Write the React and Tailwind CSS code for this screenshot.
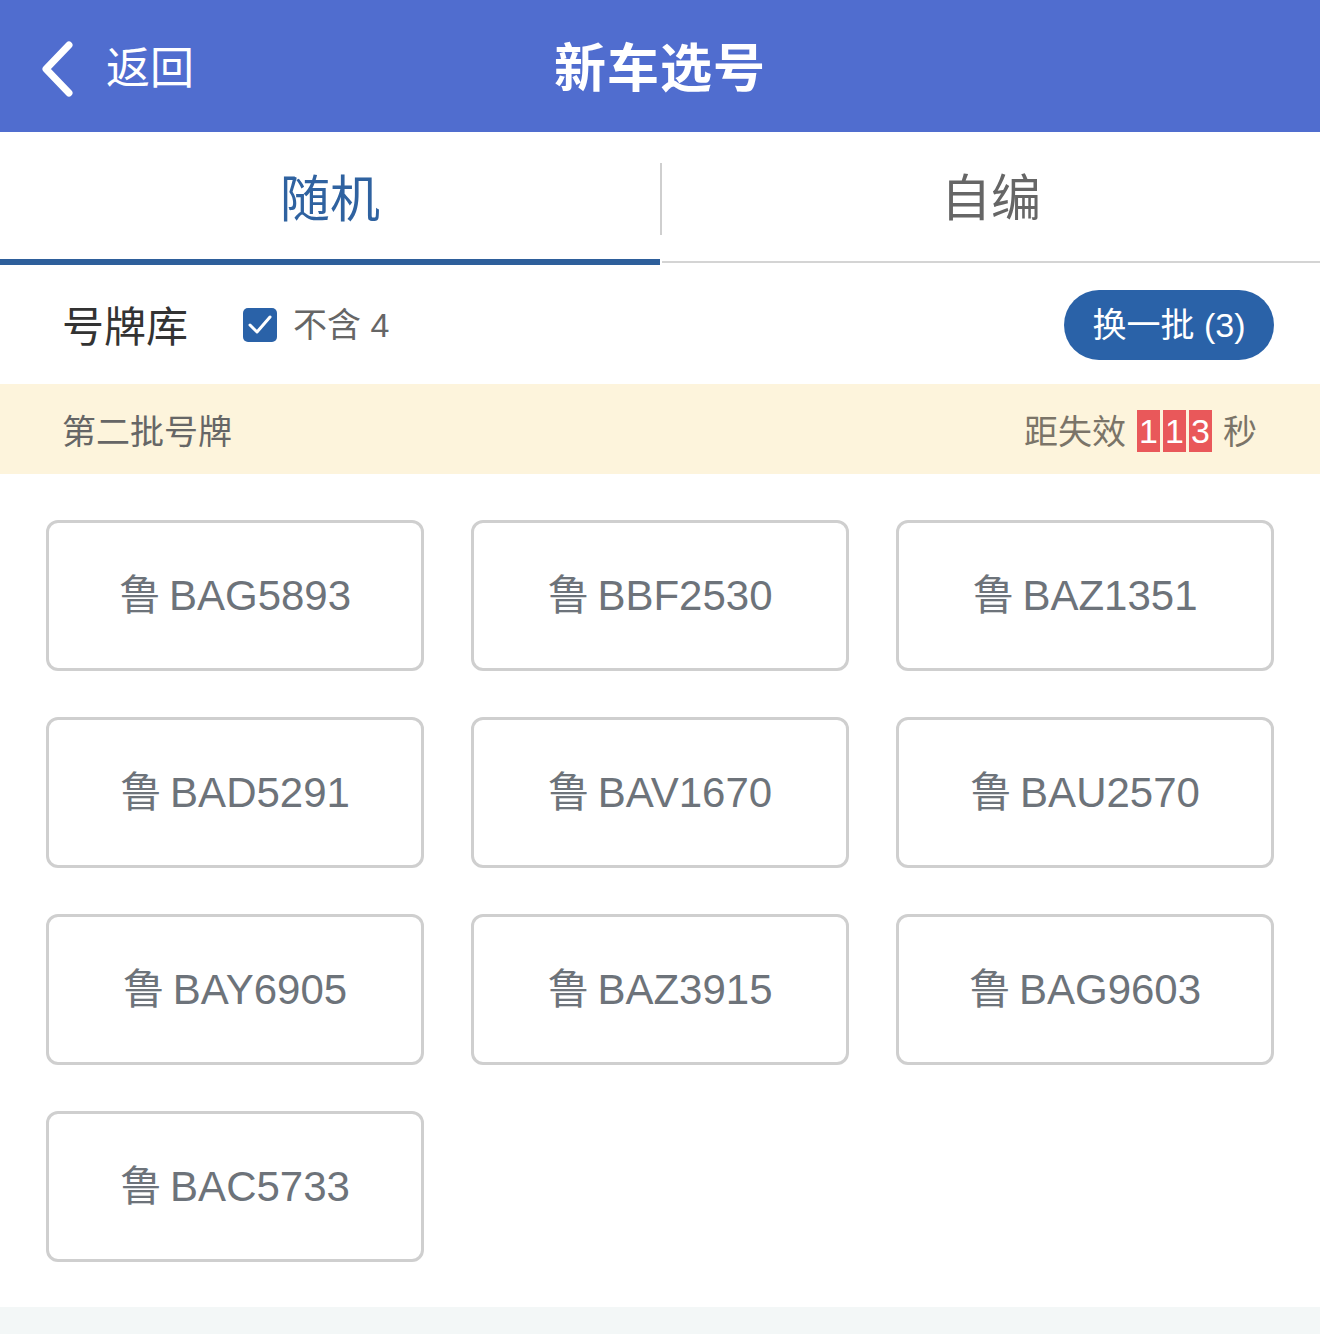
import { useState } from "react";

const FONT = { fontFamily: '"Liberation Sans", "Noto Sans CJK SC", sans-serif' };

const plates = [
  "BAG5893", "BBF2530", "BAZ1351",
  "BAD5291", "BAV1670", "BAU2570",
  "BAY6905", "BAZ3915", "BAG9603",
  "BAC5733",
];

export default function App() {
  const [tab, setTab] = useState(0);
  const [no4, setNo4] = useState(true);

  return (
    <div className="w-[1320px] h-[1334px] bg-white flex flex-col overflow-hidden" style={FONT}>
      {/* header */}
      <div className="h-[132px] bg-[#506dcf] relative flex items-center shrink-0 pt-[6px]">
        <div className="flex items-center pl-[38px] gap-[30px] text-white">
          <svg width="38" height="58" viewBox="0 0 38 58" fill="none">
            <path d="M31 5 L8 29 L31 53" stroke="white" strokeWidth="7" strokeLinecap="round" strokeLinejoin="round" />
          </svg>
          <span className="text-[44px] leading-none">返回</span>
        </div>
        <div className="absolute inset-0 flex items-center justify-center pointer-events-none pt-[6px]">
          <span className="text-white text-[52px] font-bold leading-none tracking-[1px]">新车选号</span>
        </div>
      </div>

      {/* tabs */}
      <div className="h-[133px] flex shrink-0 relative">
        <button
          onClick={() => setTab(0)}
          className={"w-[660px] flex items-center justify-center text-[50px] leading-none pt-[8px] " + (tab === 0 ? "text-[#2f62a0] border-b-[6px] border-[#2e5f9b]" : "text-[#666] border-b-2 border-[#d4d4d4]")}
        >
          随机
        </button>
        <div className="w-[2px] h-[72px] bg-[#cfcfcf] self-start mt-[31px]" />
        <button
          onClick={() => setTab(1)}
          className={"flex-1 flex items-center justify-center text-[50px] leading-none pt-[4px] " + (tab === 1 ? "text-[#2f62a0] border-b-[6px] border-[#2e5f9b]" : "text-[#666] border-b-2 border-[#d4d4d4] mb-[2px]")}
        >
          自编
        </button>
      </div>

      {/* filter row */}
      <div className="h-[119px] flex items-center px-[62px] shrink-0">
        <span className="text-[42px] text-[#333] leading-none pt-[6px]">号牌库</span>
        <button onClick={() => setNo4(!no4)} className="flex items-center ml-[55px] gap-[16px]">
          <span className={"w-[34px] h-[34px] rounded-[5px] flex items-center justify-center " + (no4 ? "bg-[#2a62a8]" : "border-2 border-[#999] bg-white")}>
            {no4 && (
              <svg width="26" height="22" viewBox="0 0 26 22" fill="none">
                <path d="M3 11 L10 18 L23 3" stroke="white" strokeWidth="3" strokeLinecap="round" strokeLinejoin="round" />
              </svg>
            )}
          </span>
          <span className="text-[34px] text-[#666] leading-none">不含 4</span>
        </button>
        <button className="ml-auto mr-[-16px] h-[70px] w-[210px] rounded-full bg-[#2a62a8] text-white text-[34px] leading-none flex items-center justify-center">
          换一批 (3)
        </button>
      </div>

      {/* batch band */}
      <div className="h-[90px] bg-[#fdf4dc] flex items-center pl-[62px] pr-[63px] shrink-0">
        <span className="text-[34px] text-[#666] leading-none pt-[5px]">第二批号牌</span>
        <div className="ml-auto flex items-center text-[34px] text-[#7b7468] leading-none">
          <span className="pt-[5px]">距失效</span>
          <div className="flex items-center gap-[3px] ml-[11px] mr-[11px] pt-[3px]">
            {["1", "1", "3"].map((d, i) => (
              <span key={i} className="w-[23px] h-[42px] bg-[#e9585a] text-white text-[34px] flex items-center justify-center">
                {d}
              </span>
            ))}
          </div>
          <span className="pt-[5px]">秒</span>
        </div>
      </div>

      {/* plates */}
      <div className="grid grid-cols-3 gap-x-[47px] gap-y-[46px] px-[46px] pt-[46px]">
        {plates.map((p) => (
          <div
            key={p}
            className="h-[151px] border-[3px] border-[#cfcfcf] rounded-[12px] flex items-center justify-center text-[42px] text-[#6d737a] leading-none"
          >
            <span>鲁</span>
            <span className="ml-[8px]">{p}</span>
          </div>
        ))}
      </div>

      <div className="flex-1" />
      <div className="h-[27px] bg-[#f3f7f7] shrink-0" />
    </div>
  );
}
